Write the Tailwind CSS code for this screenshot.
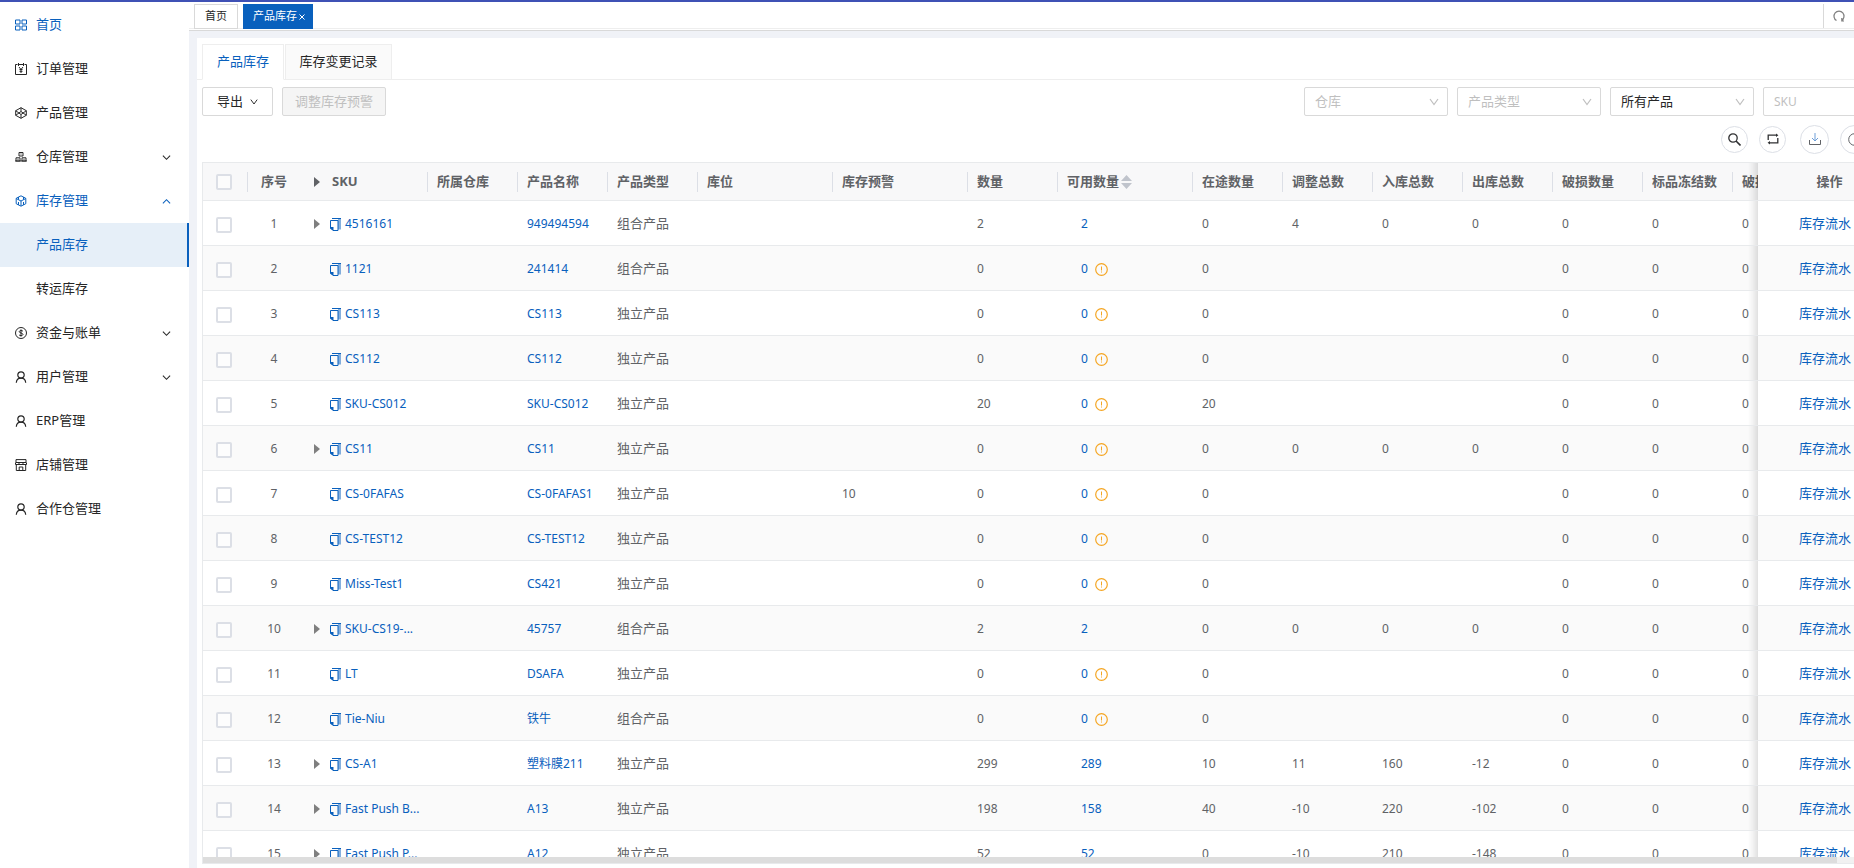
<!DOCTYPE html>
<html lang="zh-CN">
<head>
  <meta charset="UTF-8" />
  <meta name="viewport" content="width=device-width, initial-scale=1.0" />
  <title>产品库存</title>
  <script src="https://cdn.jsdelivr.net/npm/@tailwindcss/browser@4"></script>
</head>
<body class="h-screen overflow-hidden flex flex-col bg-[#f0f2f7] border-t-2 border-[#3f51b5] font-['Noto_Sans','Noto_Sans_CJK_SC',sans-serif] text-[13px] text-[#262626]">

  <!-- Icons -->
  <svg class="hidden">
    <symbol id="i-home" viewBox="0 0 12 12"><path fill="none" stroke="currentColor" d="M.5 1h4.5v4H.5zM7 1h4.500v4H7zM.5 7h4.500v4H.5zM7 7h4.500v4H7z"/></symbol>
    <symbol id="i-order" viewBox="0 0 12 12"><path fill="none" stroke="currentColor" d="M2.500 1.500H.5v10h11v-10h-2M4 1.500h4M3.500 0v3M8.500 0v3M4 4l2 2.500L8 4M6 6v4M4.500 6.500h3M4.500 8.300h3"/></symbol>
    <symbol id="i-product" viewBox="0 0 12 12"><path fill="none" stroke="currentColor" d="M6 .7l5.300 3v4.600L6 11.300l-5.300-3V3.700zM.7 3.700L6 7.500l5.300-3.800M.7 8.300L6 4.500l5.300 3.800M6 .7v3.800M6 7.500v3.800"/></symbol>
    <symbol id="i-depot" viewBox="0 0 12 12"><path fill="none" stroke="currentColor" d="M4 1.500h4v3.500H4zM1 6.800h4V10H1zM7 6.800h4V10H7zM0 10h12M5.500 3h1M2.500 8.300h1M8.500 8.300h1"/></symbol>
    <symbol id="i-stock" viewBox="0 0 12 12"><path fill="none" stroke="currentColor" d="M6 .8l4.800 2.500v5.400L6 11.200 1.200 8.700V3.300zM1.200 3.500L6 6l4.800-2.500M6 6v5M3.500 2v2.500M8.500 2v2.500M3.500 7v3M8.500 7v3"/></symbol>
    <symbol id="i-money" viewBox="0 0 12 12"><circle cx="6" cy="6" r="5.500" fill="none" stroke="currentColor"/><path fill="none" stroke="currentColor" d="M8 4.300C7.500 3.300 4.200 3.200 4.200 4.700S8 5.900 8 7.400 4.300 9 4 7.700M6 2.400v7.200"/></symbol>
    <symbol id="i-user" viewBox="0 0 12 12"><circle cx="6" cy="4" r="3.200" fill="none" stroke="currentColor" stroke-width="1.200"/><path fill="none" stroke="currentColor" stroke-width="1.200" d="M1.300 11.800C1.500 8.500 3.500 7.200 6 7.200s4.500 1.300 4.700 4.600"/></symbol>
    <symbol id="i-shop" viewBox="0 0 12 12"><path fill="none" stroke="currentColor" d="M1 .6h10v2.900H1zM.5 3.500v2h11v-2M1.300 5.500v6h9.400v-6M4 3.500v2M8 3.500v2M4.200 11V8h3.600v3"/></symbol>
    <symbol id="i-down" viewBox="0 0 10 10"><path fill="none" stroke="currentColor" stroke-width="1.200" d="M1 3l4 4 4-4"/></symbol>
    <symbol id="i-open" viewBox="0 0 10 10"><path fill="none" stroke="currentColor" stroke-width="1.200" d="M1 2l4 5.500L9 2"/></symbol>
    <symbol id="i-copy" viewBox="0 0 11 13"><path fill="currentColor" fill-opacity=".5" d="M8 1h3v10.500H8z"/><path fill="none" stroke="currentColor" d="M2 .5h9M.5 9.500v-7h7.500v10H3"/><path fill="currentColor" d="M0 9h3.500v3.500H2.500L0 10.500z"/></symbol>
    <symbol id="i-warn" viewBox="0 0 13 13"><circle cx="6.500" cy="6.500" r="5.800" fill="none" stroke="currentColor" stroke-width="1.200"/><path stroke="currentColor" d="M6.500 3.500v4M6.500 8.500v1"/></symbol>
    <symbol id="i-tri" viewBox="0 0 6 10"><path fill="currentColor" d="M0 0l6 5-6 5z"/></symbol>
  </svg>

  <div class="flex flex-1 min-h-0">
    <!-- Sidebar -->
    <aside class="w-[189px] shrink-0 bg-white">
      <nav id="menu" class="pt-px"></nav>
    </aside>

    <main class="flex-1 min-w-0 flex flex-col overflow-hidden">
      <!-- Page tabs -->
      <div class="h-[29px] shrink-0 bg-white border-b border-[#d9d9d9] pb-px">
        <div class="flex h-[27px] pl-[5px] pt-[2px] gap-[5px] border-b border-[#eeeeee] text-[11px]">
          <button class="w-[44px] h-[25px] border border-[#d9d9d9] bg-white">首页</button>
          <button class="w-[70px] h-[25px] pl-[2px] bg-[#0960bd] text-white flex items-center justify-center gap-[2px]">产品库存
            <svg class="w-[6px] h-[6px]" viewBox="0 0 6 6"><path stroke="currentColor" d="M.5.500l5 5M5.500.500l-5 5"/></svg>
          </button>
          <button class="ml-auto w-[31px] h-[24px] border-l border-[#d9d9d9] flex items-center justify-center text-[#7f7f7f]" aria-label="刷新">
            <svg class="w-[12px] h-[12px]" viewBox="0 0 12 12"><path fill="none" stroke="currentColor" stroke-width="1.200" d="M3.500 10.500a5 5 0 1 1 5 0M8.800 8v3H11"/></svg>
          </button>
        </div>
      </div>

      <!-- Card, runs past the right edge of the window -->
      <div class="flex-1 min-h-0 flex flex-col mt-[7px] ml-2 -mr-[53px] bg-white pb-1">
        <div class="flex pl-[5px] pt-[6px] gap-[1px] border-b border-[#eeeeee]">
          <button class="w-[82px] h-[36px] -mb-px border border-b-white border-[#eeeeee] bg-white text-[#0960bd]">产品库存</button>
          <button class="w-[107px] h-[35px] border border-b-0 border-[#eeeeee] bg-[#fafafa]">库存变更记录</button>
        </div>

        <div class="flex px-[5px] pt-[7px]">
          <button class="w-[71px] h-[29px] border border-[#d9d9d9] rounded-xs flex items-center justify-center gap-[7px]">导出
            <svg class="w-[8px] h-[8px]"><use href="#i-open"/></svg>
          </button>
          <button disabled class="w-[104px] h-[29px] ml-[9px] border border-[#d9d9d9] rounded-xs bg-[#f5f5f5] text-[#bfbfbf]">调整库存预警</button>
          <div class="ml-auto flex gap-[9px] -mr-[5px]">
            <label class="relative">
              <select aria-label="仓库" class="appearance-none w-[144px] h-[29px] pl-[10px] border border-[#d9d9d9] rounded-xs text-[#bfbfbf]"><option>仓库</option></select>
              <svg class="absolute right-[9px] top-[10px] w-[10px] h-[10px] text-[#bfbfbf]"><use href="#i-open"/></svg>
            </label>
            <label class="relative">
              <select aria-label="产品类型" class="appearance-none w-[144px] h-[29px] pl-[10px] border border-[#d9d9d9] rounded-xs text-[#bfbfbf]"><option>产品类型</option></select>
              <svg class="absolute right-[9px] top-[10px] w-[10px] h-[10px] text-[#bfbfbf]"><use href="#i-open"/></svg>
            </label>
            <label class="relative">
              <select aria-label="产品范围" class="appearance-none w-[144px] h-[29px] pl-[10px] border border-[#d9d9d9] rounded-xs"><option>所有产品</option></select>
              <svg class="absolute right-[9px] top-[10px] w-[10px] h-[10px] text-[#bfbfbf]"><use href="#i-open"/></svg>
            </label>
            <input type="text" aria-label="SKU" placeholder="SKU" class="w-[144px] h-[29px] px-[10px] border border-[#d9d9d9] rounded-xs text-[12px] placeholder:text-[#bfbfbf]" />
          </div>
        </div>

        <div class="flex items-center justify-end h-[46px] pr-[38px] gap-[11px] text-[#303133]">
          <button aria-label="搜索" class="w-[27px] h-[27px] rounded-full border border-[#dcdfe6] flex items-center justify-center">
            <svg class="w-[13px] h-[13px]" viewBox="0 0 13 13"><circle cx="5" cy="5" r="4.200" fill="none" stroke="currentColor" stroke-width="1.300"/><path stroke="currentColor" stroke-width="1.600" d="M8 8l4.500 4.500"/></svg>
          </button>
          <button aria-label="刷新列表" class="w-[27px] h-[27px] rounded-full border border-[#dcdfe6] flex items-center justify-center">
            <svg class="w-[12px] h-[12px]" viewBox="0 0 12 12"><path fill="none" stroke="currentColor" stroke-width="1.300" d="M1.200 7V2.200H10M10.800 5v4.800H2"/><path fill="currentColor" d="M9 .4l2.400 1.800L9 4zM3 8L.6 9.800 3 11.600z"/></svg>
          </button>
          <button aria-label="导出" class="w-[29px] h-[29px] ml-[3px] rounded-full border border-[#dcdfe6] flex items-center justify-center text-[#606266]">
            <svg class="w-[12px] h-[12px]" viewBox="0 0 12 12"><path fill="none" stroke="currentColor" d="M.5 7v4.500h11V7"/><path fill="none" stroke="#6f9fd8" d="M6 0v8M3 5l3 3 3-3"/></svg>
          </button>
          <button aria-label="设置" class="w-[29px] h-[29px] rounded-full border border-[#dcdfe6] flex items-center justify-center text-[#606266]">
            <svg class="w-[13px] h-[13px]" viewBox="0 0 13 13"><circle cx="6.500" cy="6.500" r="5.800" fill="none" stroke="currentColor"/></svg>
          </button>
        </div>

        <!-- Stock table -->
        <div class="flex-1 min-h-0 flex flex-col mx-[5px] border border-[#e8eaec]">
          <div class="flex-1 min-h-0 overflow-hidden">
            <table class="table-fixed w-[1763px] border-separate border-spacing-0 text-[#606266]">
              <colgroup>
                <col class="w-[45px]"><col class="w-[52px]"><col class="w-[128px]"><col class="w-[90px]"><col class="w-[90px]"><col class="w-[90px]">
                <col class="w-[135px]"><col class="w-[135px]"><col class="w-[90px]"><col class="w-[135px]"><col class="w-[90px]"><col class="w-[90px]">
                <col class="w-[90px]"><col class="w-[90px]"><col class="w-[90px]"><col class="w-[90px]"><col class="w-[90px]"><col class="w-[143px]">
              </colgroup>
              <thead><tr id="head"></tr></thead>
              <tbody id="rows"></tbody>
            </table>
          </div>
          <div class="h-[6px] shrink-0 bg-[#f1f1f1] pr-[64px]"><div class="h-full bg-[#dddddd]"></div></div>
        </div>
      </div>
    </main>
  </div>

  <script>
    const icon = (name, cls) => `<svg class="${cls}"><use href="#i-${name}"/></svg>`;

    // [icon, label, arrow, state]
    const menu = [
      ["home", "首页", "", "on"],
      ["order", "订单管理", "", ""],
      ["product", "产品管理", "", ""],
      ["depot", "仓库管理", "down", ""],
      ["stock", "库存管理", "up", "on"],
      ["", "产品库存", "", "active"],
      ["", "转运库存", "", ""],
      ["money", "资金与账单", "down", ""],
      ["user", "用户管理", "down", ""],
      ["user", "ERP管理", "", ""],
      ["shop", "店铺管理", "", ""],
      ["user", "合作仓管理", "", ""],
    ];
    const states = {
      "": "",
      on: "text-[#0960bd]",
      active: "text-[#0960bd] bg-[#e6eff8] border-r-2 border-[#0960bd]",
    };
    document.getElementById("menu").innerHTML = menu.map(([ic, label, arrow, state]) => `
      <a href="#" class="flex items-center h-[44px] pl-[15px] pr-[18px] ${states[state]}">
        <span class="w-[21px]">${ic ? icon(ic, "w-[12px] h-[12px]") : ""}</span>
        <span class="flex-1">${label}</span>
        ${arrow ? icon("down", arrow === "up" ? "w-[9px] h-[9px] rotate-180" : "w-[9px] h-[9px]") : ""}
      </a>`).join("");

    const check = `<input type="checkbox" aria-label="选择" class="block ml-[13px] mt-px appearance-none w-[16px] h-[16px] border-2 border-[#dcdfe6] rounded-xs bg-white/50">`;
    const tri = icon("tri", "w-[6px] h-[10px]");

    const heads = ["所属仓库", "产品名称", "产品类型", "库位", "库存预警", "数量", "可用数量", "在途数量", "调整总数", "入库总数", "出库总数", "破损数量", "标品冻结数", "破损冻结数"];
    const th = "h-[38px] p-0 bg-[#f8f8f9] border-b border-[#e8eaec] text-left font-bold whitespace-nowrap";
    const sep = "flex items-center h-[20px] pl-[9px] border-l border-[#dcdfe6] -ml-px";
    const sorter = `<svg class="w-[11px] h-[14px] ml-[2px] text-[#c0c4cc]" viewBox="0 0 11 14"><path fill="currentColor" d="M0 6l5.500-6L11 6zM0 8h11l-5.500 6z"/></svg>`;
    const fixed = "sticky right-0 before:absolute before:inset-y-0 before:-left-[10px] before:w-[10px] before:bg-linear-to-l before:from-black/12 before:via-black/5 before:to-transparent";

    document.getElementById("head").innerHTML = `
      <th class="${th}">${check}</th>
      <th class="${th}"><div class="flex items-center justify-center h-[20px] border-l border-[#dcdfe6] -ml-px">序号</div></th>
      <th class="${th}"><div class="flex items-center pl-[14px] gap-[12px]">${tri}SKU</div></th>
      ${heads.map(h => `<th class="${th}"><div class="${sep}">${h}${h === "可用数量" ? sorter : ""}</div></th>`).join("")}
      <th class="${th} ${fixed}"><div class="text-center">操作</div></th>`;

    // [expandable, sku, name, type, warn level, qty, available, in transit, adjusted, inbound, outbound]
    const rows = [
      [1, "4516161", "949494594", "组合产品", "", 2, 2, 0, 4, 0, 0],
      [0, "1121", "241414", "组合产品", "", 0, 0, 0, "", "", ""],
      [0, "CS113", "CS113", "独立产品", "", 0, 0, 0, "", "", ""],
      [0, "CS112", "CS112", "独立产品", "", 0, 0, 0, "", "", ""],
      [0, "SKU-CS012", "SKU-CS012", "独立产品", "", 20, 0, 20, "", "", ""],
      [1, "CS11", "CS11", "独立产品", "", 0, 0, 0, 0, 0, 0],
      [0, "CS-0FAFAS", "CS-0FAFAS1", "独立产品", 10, 0, 0, 0, "", "", ""],
      [0, "CS-TEST12", "CS-TEST12", "独立产品", "", 0, 0, 0, "", "", ""],
      [0, "Miss-Test1", "CS421", "独立产品", "", 0, 0, 0, "", "", ""],
      [1, "SKU-CS19-...", "45757", "组合产品", "", 2, 2, 0, 0, 0, 0],
      [0, "LT", "DSAFA", "独立产品", "", 0, 0, 0, "", "", ""],
      [0, "Tie-Niu", "铁牛", "组合产品", "", 0, 0, 0, "", "", ""],
      [1, "CS-A1", "塑料膜211", "独立产品", "", 299, 289, 10, 11, 160, -12],
      [1, "Fast Push B...", "A13", "独立产品", "", 198, 158, 40, -10, 220, -102],
      [1, "Fast Push P...", "A12", "独立产品", "", 52, 52, 0, -10, 210, -148],
    ];
    document.getElementById("rows").innerHTML = rows.map(([open, sku, name, type, warn, qty, avail, ...rest], i) => {
      const td = `h-[45px] pt-[2px] pr-0 pb-0 border-b border-[#e8eaec] whitespace-nowrap ${i % 2 ? "bg-[#fafafa]" : "bg-white"}`;
      const num = v => `<td class="${td} pl-[9px] text-[12px]">${v}</td>`;
      return `<tr>
        <td class="${td} pl-0">${check}</td>
        <td class="${td} pl-0 text-center text-[12px]">${i + 1}</td>
        <td class="${td} pl-[14px] text-[12px]"><div class="flex items-center">
          <span class="w-[16px] text-[#7f7f7f]">${open ? tri : ""}</span>
          <a href="#" class="flex items-center gap-1 text-[#0960bd]">${icon("copy", "w-[11px] h-[13px]")}${sku}</a></div></td>
        <td class="${td} pl-0"></td>
        <td class="${td} pl-[9px] text-[12px]"><a href="#" class="text-[#0960bd]">${name}</a></td>
        <td class="${td} pl-[9px]">${type}</td>
        <td class="${td} pl-0"></td>
        ${num(warn)}${num(qty)}
        <td class="${td} pl-[23px] text-[12px]"><div class="flex items-center gap-[7px]"><a href="#" class="text-[#0960bd]">${avail}</a>${avail ? "" : icon("warn", "w-[13px] h-[13px] text-[#f5a623]")}</div></td>
        ${rest.map(num).join("")}${num(0)}${num(0)}${num(0)}
        <td class="${td} pl-[41px] ${fixed}"><a href="#" class="text-[#0960bd]">库存流水</a></td>
      </tr>`;
    }).join("");
  </script>
</body>
</html>
